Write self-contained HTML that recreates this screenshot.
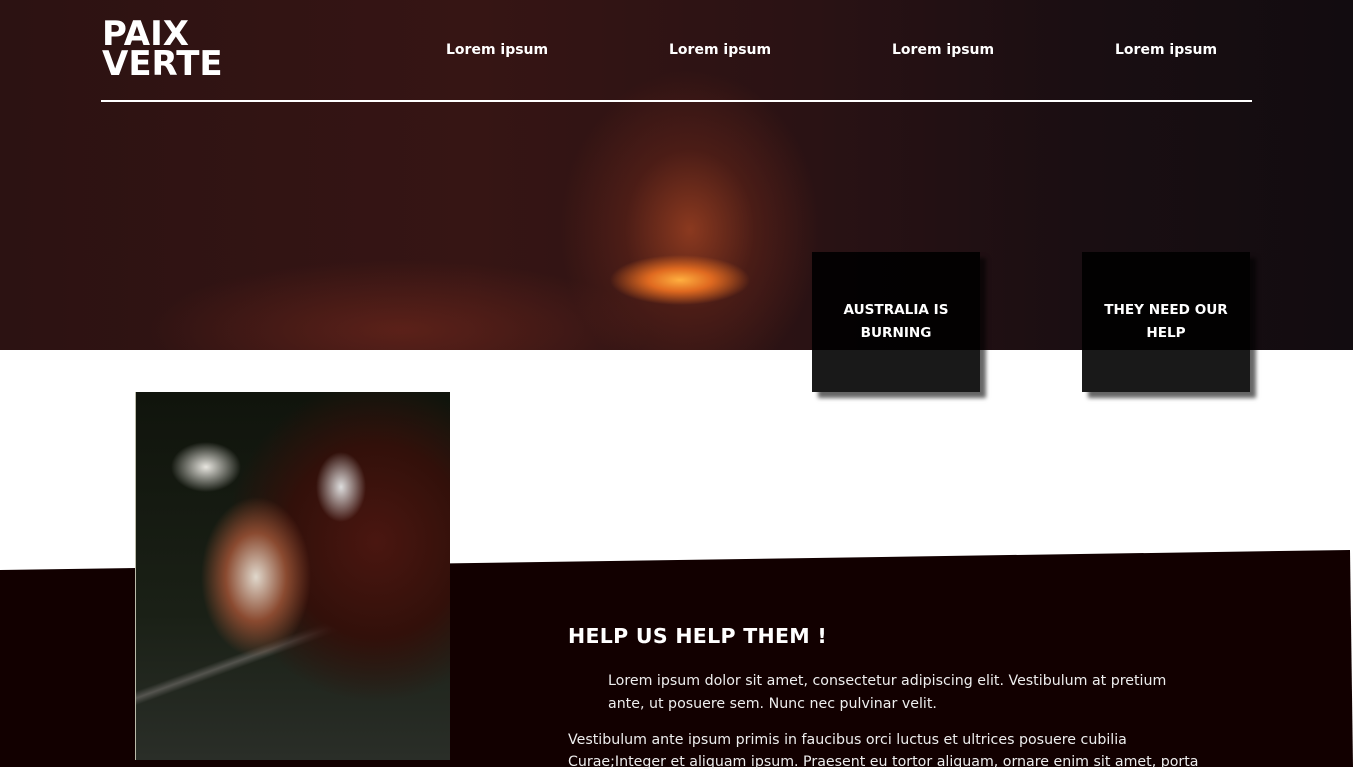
<!DOCTYPE html>
<html><head><meta charset="utf-8"><style>
*{margin:0;padding:0;box-sizing:border-box}
body{width:1353px;height:767px;overflow:hidden;background:#fff;font-family:"DejaVu Sans","Liberation Sans",sans-serif;position:relative}
.hero{position:absolute;left:0;top:0;width:1353px;height:350px;
background:
radial-gradient(ellipse 70px 25px at 680px 280px,#ffb040 0%,#e06a20 45%,rgba(200,70,20,0) 100%),
radial-gradient(ellipse 130px 160px at 690px 230px,rgba(170,70,35,.75) 0%,rgba(110,40,25,.45) 50%,rgba(60,20,20,0) 100%),
radial-gradient(ellipse 250px 70px at 400px 330px,rgba(130,45,30,.5),rgba(60,20,20,0)),
linear-gradient(90deg,#2c1212 0%,#361514 35%,#2a1214 60%,#1a0e12 80%,#120c10 100%);}
.logo{position:absolute;left:102px;top:19px;color:#fff;font-weight:bold;font-size:34px;line-height:30px}
.nav a{position:absolute;top:42px;color:#fff;font-weight:bold;font-size:14px;text-decoration:none}
.line{position:absolute;left:101px;top:100px;width:1151px;height:2px;background:#fff}
.box{position:absolute;top:252px;width:168px;height:140px;background:rgba(0,0,0,.9);box-shadow:6px 6px 4px rgba(0,0,0,.6);color:#fff;font-weight:bold;font-size:13.6px;line-height:23px;text-align:center;padding-top:47px}
.dark{position:absolute;left:0;top:0;width:1353px;height:767px;background:#120000;clip-path:polygon(0 570px,1350px 550px,1353px 767px,0 767px)}
.panda{position:absolute;left:135px;top:392px;width:315px;height:368px;border-left:1px solid #bba;
background:
radial-gradient(ellipse 30px 35px at 210px 480px,rgba(0,0,0,0),rgba(0,0,0,0)),
radial-gradient(ellipse 35px 25px at 70px 75px,#e8e6e0 0%,rgba(220,220,210,0) 100%),
radial-gradient(ellipse 25px 35px at 205px 95px,#ddd 0%,rgba(220,220,210,0) 100%),
radial-gradient(ellipse 55px 80px at 120px 185px,#e0d8cc 0%,#8a4a30 55%,rgba(90,40,25,0) 100%),
radial-gradient(ellipse 150px 160px at 240px 150px,#4a1610 0%,#32100a 60%,rgba(30,20,10,0) 100%),
linear-gradient(160deg,rgba(0,0,0,0) 62%,rgba(180,170,170,.35) 63.5%,rgba(0,0,0,0) 65%),
linear-gradient(180deg,#10140c 0%,#1a2016 60%,#2a2e28 100%)}
h2{position:absolute;left:568px;top:624px;color:#fff;font-size:20.5px;font-weight:bold;letter-spacing:.3px}
.p1{position:absolute;left:608px;top:670px;width:580px;color:#eee;font-size:14.2px;line-height:23px}
.p2{position:absolute;left:568px;top:729px;width:640px;color:#eee;font-size:14.2px;line-height:22px;white-space:nowrap}
</style></head><body>
<div class="hero"></div>
<div class="logo">PAIX<br>VERTE</div>
<div class="nav"><a style="left:446px">Lorem ipsum</a><a style="left:669px">Lorem ipsum</a><a style="left:892px">Lorem ipsum</a><a style="left:1115px">Lorem ipsum</a></div>
<div class="line"></div>
<div class="dark"></div>
<div class="box" style="left:812px">AUSTRALIA IS<br>BURNING</div>
<div class="box" style="left:1082px">THEY NEED OUR<br>HELP</div>
<div class="panda"></div>
<h2>HELP US HELP THEM !</h2>
<div class="p1">Lorem ipsum dolor sit amet, consectetur adipiscing elit. Vestibulum at pretium ante, ut posuere sem. Nunc nec pulvinar velit.</div>
<div class="p2">Vestibulum ante ipsum primis in faucibus orci luctus et ultrices posuere cubilia<br>Curae;Integer et aliquam ipsum. Praesent eu tortor aliquam, ornare enim sit amet, porta</div>
</body></html>
